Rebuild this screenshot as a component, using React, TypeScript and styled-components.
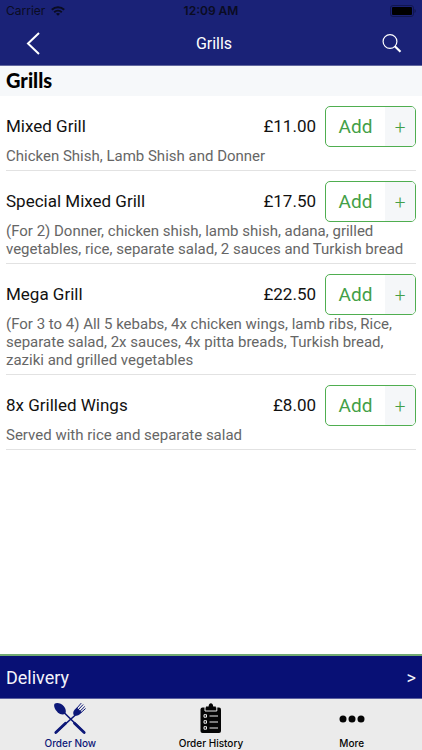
import React from "react";
import styled, { createGlobalStyle } from "styled-components";

const GlobalStyle = createGlobalStyle`
  *, *::before, *::after { box-sizing: border-box; }
  body {
    margin: 0;
    background: #fff;
    color: #111;
    font-family: Roboto, "Open Sans", sans-serif;
  }
  button { font: inherit; border: 0; padding: 0; background: none; cursor: pointer; }
`;

const Page = styled.div`
  min-height: 100vh;
  display: flex;
  flex-direction: column;
`;

const TopBar = styled.header`
  background: #1a2277;
  border-bottom: 1px solid #62689f;
`;

const StatusBar = styled.div`
  display: grid;
  grid-template-columns: 1fr auto 1fr;
  align-items: center;
  height: 22px;
  padding: 0 6px;
  color: #0a0c22;
  font: 12px/22px Inter, sans-serif;
`;

const Carrier = styled.span`
  display: flex;
  align-items: center;
  gap: 6px;
`;

const Clock = styled.time`
  font-weight: 600;
`;

const BatteryIcon = styled.svg`
  justify-self: end;
`;

const NavBar = styled.div`
  display: grid;
  grid-template-columns: 60px 1fr 60px;
  align-items: center;
  height: 43px;
  color: #fff;
`;

const NavTitle = styled.h1`
  margin: 0;
  padding-left: 6px;
  text-align: center;
  font-size: 16px;
  line-height: 20px;
  font-weight: 400;
`;

const IconButton = styled.button`
  display: flex;
  align-items: center;
  justify-content: center;
  height: 43px;
  color: #fff;
`;

const Content = styled.main`
  flex: 1;
`;

const SectionTitle = styled.h2`
  margin: 0;
  padding: 0 6px 2px;
  background: #f6f8fa;
  color: #000;
  font-family: Lato, sans-serif;
  font-size: 20px;
  line-height: 28px;
  font-weight: 900;
`;

const Menu = styled.ul`
  list-style: none;
  margin: 0;
  padding: 0 6px;
`;

const Item = styled.li`
  padding: 10px 0 5px;
  border-bottom: 1px solid #e2e2e2;
`;

const ItemHead = styled.div`
  display: flex;
  align-items: center;
  gap: 9px;
`;

const ItemName = styled.h3`
  flex: 1;
  margin: 0;
  padding-bottom: 2px;
  font-size: 17px;
  line-height: 20px;
  font-weight: 400;
`;

const Price = styled.span`
  padding-bottom: 2px;
  font-size: 17px;
  line-height: 20px;
`;

const AddButton = styled.button`
  display: flex;
  width: 91px;
  height: 41px;
  border: 1px solid #4fae50;
  border-radius: 5px;
  overflow: hidden;
  background: #fff;
  color: #43a047;
  line-height: 40px;
`;

const AddLabel = styled.span`
  flex: 1;
  font-size: 19px;
`;

const AddPlus = styled.span`
  width: 30px;
  background: #f5f7f9;
  font-size: 19px;
  line-height: 42px;
  font-weight: 300;
`;

const Description = styled.p`
  margin: 0;
  color: #666;
  font-size: 15px;
  line-height: 18px;
`;

const Bottom = styled.footer`
  position: sticky;
  bottom: 0;
`;

const DeliveryBar = styled.button`
  display: flex;
  align-items: center;
  justify-content: space-between;
  width: 100%;
  height: 44px;
  padding: 0 6px;
  border-top: 2px solid #72aa72;
  background: #081075;
  color: #f4f4fa;
  font-size: 18px;
`;

const Tabs = styled.nav`
  display: grid;
  grid-template-columns: repeat(3, 1fr);
  height: 52px;
  border-top: 1px solid #5b5f9f;
  background: #ebebeb;
`;

const Tab = styled.a<{ $active?: boolean }>`
  display: flex;
  flex-direction: column;
  align-items: center;
  gap: 1px;
  padding-top: 3px;
  color: ${(p) => (p.$active ? "#0d1878" : "#050505")};
  font: 500 10px/14px Inter, sans-serif;
  text-decoration: none;
`;

const WifiIcon = () => (
  <svg width="14" height="10" viewBox="0 0 14 10" fill="none" stroke="currentColor" strokeWidth="2" aria-hidden="true">
    <path d="M.8 3.7a9 9 0 0 1 12.4 0M3.2 6.2a5.6 5.6 0 0 1 7.600 0" />
    <path d="M7 9.8 4.9 7.8a3.2 3.2 0 0 1 4.2 0z" fill="currentColor" stroke="none" />
  </svg>
);

const CutleryIcon = () => (
  <svg width="34" height="33" viewBox="0 0 34 33" fill="currentColor" aria-hidden="true">
    <path d="M1.600 1.800C3.700.4 8 1 10.800 4.300c2 2.400 2.600 5.300 1.500 7.200-2 1.500-5 1.200-7.700-1.300C1.600 7.300.4 3.700 1.600 1.800z" />
    <path d="M11 10.500 31 30.300M23 12.500 3 30.300" stroke="currentColor" strokeWidth="1.600" />
    <path d="m21.500 21.200 9.700 9.300M12.500 21.200l-9.700 9.300" stroke="currentColor" strokeWidth="2.800" strokeLinecap="round" />
    <path d="M20.700 13c-1-2.300-.4-4.100 1.100-5.600l2-1.900 5 4.700-2 2c-1.500 1.500-3.600 2-6.100.8z" />
    <path d="m23.500 6.600 4.500-5.200M25.200 7.800l4.700-5M26.800 9.400l4.700-4.600M28 10.600l4.300-3.800" stroke="currentColor" strokeWidth="1" strokeLinecap="round" />
  </svg>
);

const ClipboardIcon = () => (
  <svg width="34" height="33" viewBox="0 0 34 33" aria-hidden="true">
    <path d="M8.500 5.500h16.500q2 0 2 2v21.500q0 2-2 2h-16.500q-2 0-2-2V7.500q0-2 2-2z" fill="currentColor" />
    <path d="M11 5v4h11.800V5" fill="none" stroke="#ebebeb" strokeWidth="1" />
    <path d="M12 8V4.500h2.600c.2-4.300 4.400-4.300 4.600 0h2.600V8z" fill="currentColor" />
    <path d="M15.500 14h8.500M15.500 20h8.500M15.500 26h8.500" stroke="#ebebeb" strokeWidth="1.200" />
    <path d="M10 12.700h2.500v2.500H10zM10 18.700h2.500v2.500H10zM10 24.700h2.500v2.500H10z" fill="none" stroke="#ebebeb" />
  </svg>
);

const MoreIcon = () => (
  <svg width="34" height="33" viewBox="0 0 34 33" fill="currentColor" aria-hidden="true">
    <circle cx="8" cy="17" r="3.500" />
    <circle cx="17" cy="17" r="3.500" />
    <circle cx="26" cy="17" r="3.500" />
  </svg>
);

const dishes = [
  { name: "Mixed Grill", price: "£11.00", text: "Chicken Shish, Lamb Shish and Donner" },
  {
    name: "Special Mixed Grill",
    price: "£17.50",
    text: "(For 2) Donner, chicken shish, lamb shish, adana, grilled vegetables, rice, separate salad, 2 sauces and Turkish bread",
  },
  {
    name: "Mega Grill",
    price: "£22.50",
    text: "(For 3 to 4) All 5 kebabs, 4x chicken wings, lamb ribs, Rice, separate salad, 2x sauces, 4x pitta breads, Turkish bread, zaziki and grilled vegetables",
  },
  { name: "8x Grilled Wings", price: "£8.00", text: "Served with rice and separate salad" },
];

export default function App() {
  return (
    <Page>
      <GlobalStyle />
      <TopBar>
        <StatusBar>
          <Carrier>
            Carrier
            <WifiIcon />
          </Carrier>
          <Clock>12:09 AM</Clock>
          <BatteryIcon width="26" height="12" viewBox="0 0 26 12" aria-hidden="true">
            <rect x=".5" y=".5" width="23" height="11" rx="2.500" fill="none" stroke="#11164f" />
            <rect x="2" y="2" width="20" height="8" rx="1" fill="#000" />
            <path d="M24.500 4v4q1.300-.6 1.300-2t-1.300-2z" fill="#11164f" />
          </BatteryIcon>
        </StatusBar>
        <NavBar>
          <IconButton aria-label="Back">
            <svg width="26" height="24" viewBox="0 0 26 24" fill="none" stroke="currentColor" strokeWidth="2" aria-hidden="true">
              <path d="M22 1 11 11.500 22 22" />
            </svg>
          </IconButton>
          <NavTitle>Grills</NavTitle>
          <IconButton aria-label="Search">
            <svg width="20" height="20" viewBox="0 0 20 20" fill="none" stroke="currentColor" aria-hidden="true">
              <circle cx="8" cy="7.500" r="6.900" strokeWidth="1.200" />
              <path d="m12.800 12.300 5.700 5.400" strokeWidth="2.200" />
            </svg>
          </IconButton>
        </NavBar>
      </TopBar>
      <Content>
        <SectionTitle>Grills</SectionTitle>
        <Menu>
          {dishes.map((dish) => (
            <Item key={dish.name}>
              <ItemHead>
                <ItemName>{dish.name}</ItemName>
                <Price>{dish.price}</Price>
                <AddButton aria-label={`Add ${dish.name}`}>
                  <AddLabel>Add</AddLabel>
                  <AddPlus>+</AddPlus>
                </AddButton>
              </ItemHead>
              <Description>{dish.text}</Description>
            </Item>
          ))}
        </Menu>
      </Content>
      <Bottom>
        <DeliveryBar>
          <span>Delivery</span>
          <span>&gt;</span>
        </DeliveryBar>
        <Tabs aria-label="Main">
          <Tab href="#order" $active aria-current="page">
            <CutleryIcon />
            Order Now
          </Tab>
          <Tab href="#history">
            <ClipboardIcon />
            Order History
          </Tab>
          <Tab href="#more">
            <MoreIcon />
            More
          </Tab>
        </Tabs>
      </Bottom>
    </Page>
  );
}
